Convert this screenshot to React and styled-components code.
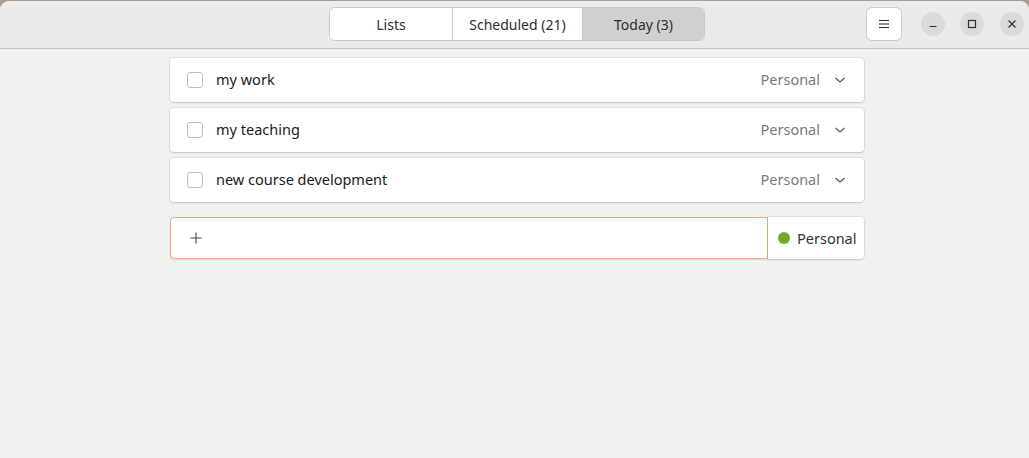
import React from 'react';
import styled, { createGlobalStyle } from 'styled-components';

const GlobalStyle = createGlobalStyle`
  html, body { margin: 0; padding: 0; }
  body {
    background: #a69e90;
    font-family: "Noto Sans", "Open Sans", sans-serif;
    font-size: 14px;
    color: #1e1e1e;
  }
`;

const Window = styled.div`
  margin-top: 1px;
  height: 457px;
  background: #f1f1f1;
  border-radius: 9px 9px 0 0;
  overflow: hidden;
  display: flex;
  flex-direction: column;
  padding-left: 5px;
  box-sizing: border-box;
`;

const HeaderBar = styled.div`
  height: 47px;
  flex-shrink: 0;
  margin-left: -5px;
  padding-left: 5px;
  background: #ebebeb;
  border-bottom: 1px solid #c4c4c4;
  display: grid;
  grid-template-columns: 1fr auto 1fr;
  align-items: center;
`;

const Segmented = styled.div`
  grid-column: 2;
  display: flex;
  height: 32px;
  border: 1px solid #c9c9c9;
  border-radius: 6px;
  overflow: hidden;
  margin-top: -1px;
`;

const Segment = styled.div`
  width: ${p => p.$w}px;
  display: flex;
  align-items: center;
  justify-content: center;
  background: ${p => (p.$active ? '#d0d0d0' : '#ffffff')};
  border-left: ${p => (p.$first ? 'none' : '1px solid #c9c9c9')};
  color: #2e2e2e;
  font-size: 14px;
`;

const HeaderEnd = styled.div`
  grid-column: 3;
  display: flex;
  align-items: center;
  justify-content: flex-end;
  padding-right: 5px;
  margin-top: -1px;
`;

const MenuButton = styled.div`
  width: 34px;
  height: 32px;
  background: #ffffff;
  border: 1px solid #cbcbcb;
  border-radius: 6px;
  display: flex;
  align-items: center;
  justify-content: center;
  margin-right: 19px;
`;

const WinButton = styled.div`
  width: 24px;
  height: 24px;
  border-radius: 50%;
  background: #dadada;
  display: flex;
  align-items: center;
  justify-content: center;
  margin-left: ${p => p.$gap}px;
`;

const Content = styled.div`
  width: 694px;
  margin: 9px auto 0;
  display: flex;
  flex-direction: column;
  gap: 6px;
`;

const TaskRow = styled.div`
  height: 44px;
  background: #ffffff;
  border-radius: 4px;
  box-shadow: 0 0 0 1px rgba(0, 0, 0, 0.07), 0 1px 2px rgba(0, 0, 0, 0.12);
  display: flex;
  align-items: center;
  padding: 0 18px 0 17px;
`;

const Check = styled.div`
  width: 14px;
  height: 14px;
  border: 1px solid #bdbdbd;
  border-radius: 3px;
  margin-right: 13px;
  flex-shrink: 0;
  margin-top: -1px;
`;

const Title = styled.div`
  flex: 1;
  font-size: 14.5px;
  color: #1a1a1a;
  margin-top: -2px;
`;

const ListName = styled.div`
  color: #7a7a7a;
  font-size: 14.5px;
  margin-right: 14px;
  margin-top: -2px;
`;

const NewTask = styled.div`
  margin-top: 9px;
  height: 42px;
  display: flex;
  border-radius: 4px;
  box-shadow: 0 1px 2px rgba(0, 0, 0, 0.12);
`;

const Entry = styled.div`
  flex: 1;
  background: #ffffff;
  border: 1px solid #f4a586;
  border-radius: 4px 0 0 4px;
  display: flex;
  align-items: center;
  padding-left: 18px;
`;

const ListButton = styled.div`
  width: 96px;
  background: #ffffff;
  border-radius: 0 4px 4px 0;
  box-shadow: 0 0 0 1px rgba(0, 0, 0, 0.06);
  display: flex;
  align-items: center;
  padding-left: 10px;
  box-sizing: border-box;
  color: #333;
  font-size: 14.5px;
`;

const Dot = styled.span`
  width: 12px;
  height: 12px;
  border-radius: 50%;
  background: #73a824;
  margin-right: 7px;
`;

const Chevron = () => (
  <svg width="12" height="8" viewBox="0 0 12 8">
    <path d="M1.5 2 L6 6 L10.5 2" fill="none" stroke="#555" strokeWidth="1.2" />
  </svg>
);

const tasks = ['my work', 'my teaching', 'new course development'];

export default function App() {
  return (
    <>
      <GlobalStyle />
      <Window>
        <HeaderBar>
          <Segmented>
            <Segment $w={122} $first>Lists</Segment>
            <Segment $w={129}>Scheduled (21)</Segment>
            <Segment $w={121} $active>Today (3)</Segment>
          </Segmented>
          <HeaderEnd>
            <MenuButton>
              <svg width="12" height="10" viewBox="0 0 12 10">
                <path d="M1 1.5 H11 M1 5 H11 M1 8.5 H11" stroke="#2e2e2e" strokeWidth="1" />
              </svg>
            </MenuButton>
            <WinButton $gap={0}>
              <svg width="10" height="10" viewBox="0 0 10 10">
                <path d="M1.5 7.5 H8.5" stroke="#2e2e2e" strokeWidth="1.2" />
              </svg>
            </WinButton>
            <WinButton $gap={15}>
              <svg width="10" height="10" viewBox="0 0 10 10">
                <rect x="1.5" y="1.5" width="7" height="7" fill="none" stroke="#2e2e2e" strokeWidth="1.2" />
              </svg>
            </WinButton>
            <WinButton $gap={16}>
              <svg width="10" height="10" viewBox="0 0 10 10">
                <path d="M1.5 1.5 L8.5 8.5 M8.5 1.5 L1.5 8.5" stroke="#2e2e2e" strokeWidth="1.2" />
              </svg>
            </WinButton>
          </HeaderEnd>
        </HeaderBar>
        <Content>
          {tasks.map(t => (
            <TaskRow key={t}>
              <Check />
              <Title>{t}</Title>
              <ListName>Personal</ListName>
              <Chevron />
            </TaskRow>
          ))}
          <NewTask>
            <Entry>
              <svg width="14" height="14" viewBox="0 0 14 14">
                <path d="M7 1.5 V12.5 M1.5 7 H12.5" stroke="#444" strokeWidth="1.1" />
              </svg>
            </Entry>
            <ListButton>
              <Dot />
              Personal
            </ListButton>
          </NewTask>
        </Content>
      </Window>
    </>
  );
}
